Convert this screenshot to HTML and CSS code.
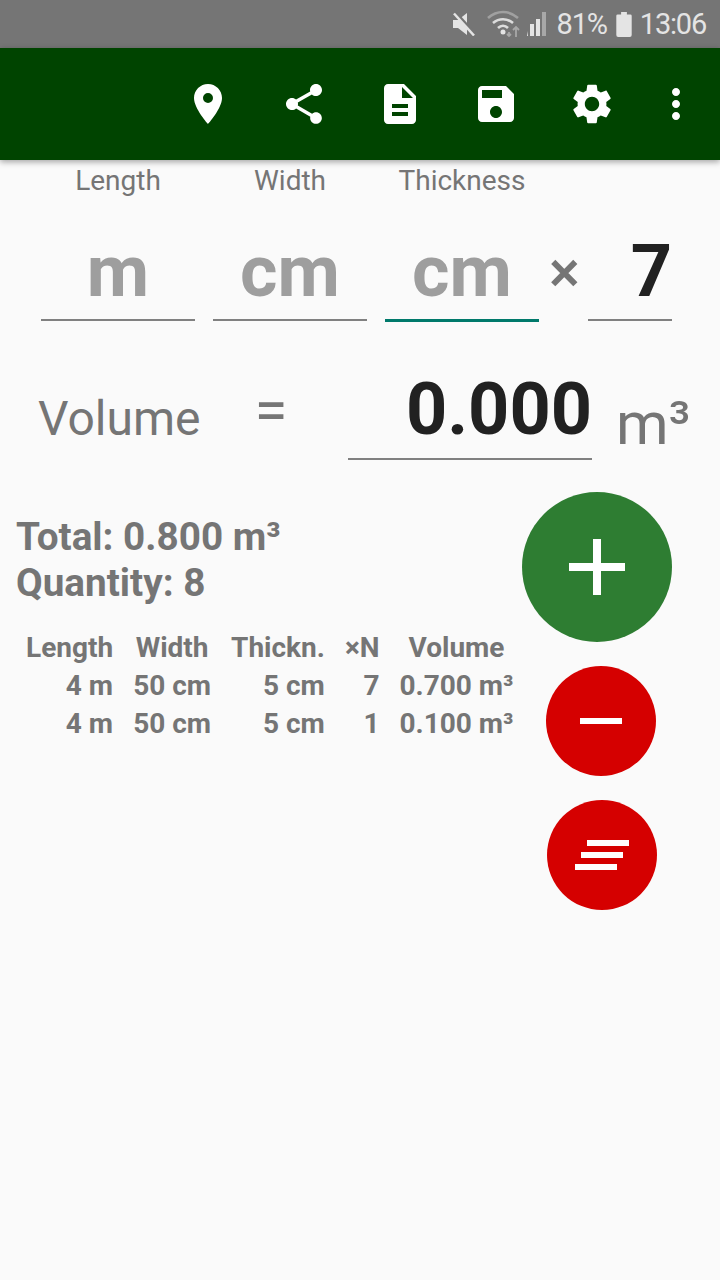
FILE: index.html
```html
<!DOCTYPE html>
<html lang="en">
<head>
<meta charset="utf-8">
<title>Volume</title>
<link rel="stylesheet" href="styles.css">
</head>
<body>
<div class="status">
  <svg class="st-mute" viewBox="0 0 24 24"><path d="M1 8h5l9-7v22l-9-7H1z"/><path class="st-gap" d="M4 1l19 21"/><path class="st-cut" d="M2 1.500l20 22"/></svg>
  <svg class="st-wifi" viewBox="0 0 37 28"><path class="arc-dim" d="M1 8C10 0 22 0 31 8"/><path class="arc" d="M6 13c6-5 14-5 20 0M11 18c3-3 7-3 10 0"/><circle class="dot" cx="16" cy="22" r="2.500"/><path class="arrows" d="M29 27v-10m-3 3l3-3 3 3M22 22v4m-2-2l2 2 2-2"/></svg>
  <svg class="st-signal" viewBox="0 0 26 26"><path d="M1 25h5l1-5v5zM9 25h4V13H9zM15 25h4V8h-4z"/><path class="dim" d="M21 25h4V1h-4z"/></svg>
  <span class="st-pct">81%</span>
  <svg class="st-batt" viewBox="0 0 16 26"><path d="M5 0h6v2.500h3.500q1.500 0 1.500 1.500v20q0 2-2 2H2q-2 0-2-2V4q0-1.500 1.500-1.500H5z"/></svg>
  <span class="st-time">13:06</span>
</div>

<header class="appbar">
  <svg class="ico" viewBox="0 0 24 24"><path d="M12 2C8.130 2 5 5.130 5 9c0 5.250 7 13 7 13s7-7.750 7-13c0-3.870-3.130-7-7-7zm0 9.500a2.500 2.500 0 0 1 0-5 2.500 2.500 0 0 1 0 5z"/></svg>
  <svg class="ico" viewBox="0 0 24 24"><path d="M18 16.080c-.760 0-1.440.300-1.960.770L8.910 12.700c.050-.230.090-.460.090-.700s-.040-.470-.090-.700l7.050-4.110c.540.500 1.250.810 2.040.810 1.660 0 3-1.340 3-3s-1.340-3-3-3-3 1.340-3 3c0 .240.040.470.090.700L8.040 9.810C7.500 9.310 6.790 9 6 9c-1.660 0-3 1.340-3 3s1.340 3 3 3c.790 0 1.500-.310 2.040-.810l7.120 4.160c-.050.210-.080.430-.080.650 0 1.610 1.310 2.920 2.920 2.920s2.920-1.310 2.920-2.920-1.310-2.920-2.920-2.920z"/></svg>
  <svg class="ico" viewBox="0 0 24 24"><path d="M14 2H6c-1.100 0-1.990.900-1.990 2L4 20c0 1.100.890 2 1.990 2H18c1.100 0 2-.900 2-2V8l-6-6zm2 16H8v-2h8v2zm0-4H8v-2h8v2zm-3-5V3.500L18.500 9H13z"/></svg>
  <svg class="ico" viewBox="0 0 24 24"><path d="M17 3H5c-1.110 0-2 .900-2 2v14c0 1.100.890 2 2 2h14c1.100 0 2-.900 2-2V7l-4-4zm-5 16c-1.660 0-3-1.340-3-3s1.340-3 3-3 3 1.340 3 3-1.340 3-3 3zm3-10H5V5h10v4z"/></svg>
  <svg class="ico" viewBox="0 0 24 24"><path d="M19.140 12.940c.040-.300.060-.610.060-.940 0-.320-.020-.640-.070-.940l2.030-1.580c.180-.140.230-.410.120-.610l-1.920-3.320c-.120-.220-.370-.290-.590-.220l-2.390.960c-.500-.380-1.030-.700-1.620-.940l-.360-2.540c-.040-.240-.240-.410-.480-.410h-3.840c-.240 0-.430.170-.470.410l-.360 2.540c-.590.240-1.130.570-1.620.940l-2.390-.960c-.220-.080-.470 0-.590.220L2.740 8.870c-.120.210-.080.470.120.610l2.030 1.580c-.050.300-.090.630-.090.940s.020.640.070.940l-2.030 1.580c-.180.140-.230.410-.120.610l1.920 3.320c.120.220.370.290.590.220l2.390-.960c.500.380 1.030.700 1.620.940l.360 2.540c.050.240.240.410.480.410h3.840c.240 0 .440-.170.470-.410l.360-2.540c.590-.240 1.130-.560 1.620-.940l2.390.960c.220.080.470 0 .590-.220l1.920-3.320c.120-.220.070-.470-.120-.610l-2.010-1.580zM12 15.600c-1.980 0-3.600-1.620-3.600-3.600s1.620-3.600 3.600-3.600 3.600 1.620 3.600 3.600-1.620 3.600-3.600 3.600z"/></svg>
  <svg class="ico ico-more" viewBox="0 0 24 24"><path d="M12 8c1.100 0 2-.900 2-2s-.900-2-2-2-2 .900-2 2 .900 2 2 2zm0 2c-1.100 0-2 .900-2 2s.900 2 2 2 2-.900 2-2-.900-2-2-2zm0 6c-1.100 0-2 .900-2 2s.900 2 2 2 2-.900 2-2-.900-2-2-2z"/></svg>
</header>

<main class="content">
  <div class="inputs">
    <div class="col"><div class="cap">Length</div><div class="field hint">m</div></div>
    <div class="col"><div class="cap">Width</div><div class="field hint">cm</div></div>
    <div class="col"><div class="cap">Thickness</div><div class="field hint focus">cm</div></div>
    <div class="times">×</div>
    <div class="col-n"><div class="field value">7</div></div>
  </div>

  <div class="volume">
    <div class="vol-label">Volume</div>
    <div class="vol-eq">=</div>
    <div class="vol-value">0.000</div>
    <div class="vol-unit">m³</div>
  </div>

  <div class="lower">
    <div class="results">
      <div class="summary">Total: 0.800 m³</div>
      <div class="summary">Quantity: 8</div>
      <table class="log">
        <tr><th>Length</th><th>Width</th><th>Thickn.</th><th>×N</th><th>Volume</th></tr>
        <tr><td>4 m</td><td>50 cm</td><td>5 cm</td><td>7</td><td>0.700 m³</td></tr>
        <tr><td>4 m</td><td>50 cm</td><td>5 cm</td><td>1</td><td>0.100 m³</td></tr>
      </table>
    </div>
    <div class="fabs">
      <div class="fab fab-add">
        <svg viewBox="0 0 56 56"><path d="M24 0h8v24h24v8H32v24h-8V32H0v-8h24z"/></svg>
      </div>
      <div class="fab fab-minus">
        <svg viewBox="0 0 42 6"><path d="M0 0h42v6H0z"/></svg>
      </div>
      <div class="fab fab-clear">
        <svg viewBox="0 0 54 30"><path d="M12 0h42v6H12zM6 12h42v6H6zM0 24h42v6H0z"/></svg>
      </div>
    </div>
  </div>
</main>
</body>
</html>
```

FILE: styles.css
```css
* { box-sizing: border-box; }
html, body { margin: 0; padding: 0; }
body {
  width: 720px;
  height: 1280px;
  overflow: hidden;
  background: #fafafa;
  font-family: Roboto, "Liberation Sans", sans-serif;
  color: #757575;
}

.status {
  height: 48px;
  background: #757575;
  color: #e4e4e4;
  display: flex;
  align-items: center;
  justify-content: flex-end;
  padding-right: 14px;
  font-size: 29px;
  letter-spacing: -1.200px;
  fill: #e4e4e4;
}
.status svg { display: block; }
.st-mute { width: 24px; height: 24px; margin-right: 11px; }
.st-gap { stroke: #757575; stroke-width: 3; fill: none; }
.st-cut { stroke: #e4e4e4; stroke-width: 2.500; fill: none; }
.st-wifi { width: 37px; height: 28px; margin-right: -3px; }
.st-wifi .arc-dim { fill: none; stroke: #a0a0a0; stroke-width: 2.600; }
.st-wifi .arc { fill: none; stroke: #dcdcdc; stroke-width: 2.600; }
.st-wifi .dot { fill: #e4e4e4; }
.st-wifi .arrows { fill: none; stroke: #a8a8a8; stroke-width: 1.800; }
.st-signal { width: 26px; height: 26px; margin-right: 10px; }
.st-signal .dim { fill: #a8a8a8; }
.st-pct { margin-right: 9px; }
.st-batt { width: 16px; height: 25px; margin-right: 8px; }

.appbar {
  height: 112px;
  background: #004400;
  box-shadow: 0 2px 6px rgba(0, 0, 0, .35);
  display: flex;
  align-items: flex-start;
  justify-content: flex-end;
  gap: 48px;
  padding: 32px 20px 0 0;
  fill: #fff;
  position: relative;
}
.ico { width: 48px; height: 48px; display: block; flex: none; }
.ico-more { margin-left: -12px; }

.inputs {
  display: flex;
  align-items: flex-end;
  padding-left: 41px;
  height: 161px;
}
.col { width: 154px; margin-right: 18px; text-align: center; }
.cap { font-size: 28px; line-height: 40px; height: 40px; margin-bottom: 16px; color: #757575; }
.field {
  height: 104px;
  line-height: 110px;
  font-size: 72px;
  font-weight: 700;
  text-align: center;
  border-bottom: 2px solid #808080;
}
.hint { color: #9e9e9e; }
.focus { border-bottom: 3px solid #00796b; height: 105px; margin-bottom: -1px; }
.value { color: #212121; text-align: right; }
.times {
  width: 47px;
  margin-left: -16px;
  font-size: 58px;
  font-weight: 500;
  text-align: center;
  line-height: 110px;
  height: 104px;
  color: #757575;
}
.col-n { width: 84px; }

.volume {
  display: flex;
  align-items: flex-start;
  height: 138px;
}
.vol-label { width: 162px; margin: 70px 0 0 38px; font-size: 48px; line-height: 56px; }
.vol-eq { width: 64px; margin: 62px 0 0 39px; text-align: center; font-size: 60px; line-height: 56px; }
.vol-value {
  width: 244px;
  margin: 45px 0 0 45px;
  height: 94px;
  border-bottom: 2px solid #808080;
  font-size: 72px;
  font-weight: 700;
  line-height: 88px;
  text-align: right;
  color: #212121;
}
.vol-unit { margin: 70px 0 0 24px; font-size: 60px; line-height: 66px; }

.lower { display: flex; align-items: flex-start; }
.results { width: 522px; padding: 55px 0 0 16px; }
.summary { font-size: 38.700px; font-weight: 700; line-height: 46px; }
.log { border-collapse: collapse; margin: 23px 0 0 10px; font-size: 28px; font-weight: 700; }
.log th, .log td { padding: 0 0 0 20px; height: 38px; line-height: 38px; white-space: nowrap; }
.log th { font-weight: 700; text-align: center; }
.log td { text-align: right; }
.log th:first-child, .log td:first-child { padding-left: 0; }

.fabs { display: flex; flex-direction: column; align-items: flex-start; padding-top: 33px; }
.fab { border-radius: 50%; display: flex; align-items: center; justify-content: center; fill: #fff; }
.fab-add { width: 150px; height: 150px; background: #2e7d32; }
.fab-add svg { width: 56px; height: 56px; }
.fab-minus, .fab-clear { width: 110px; height: 110px; background: #d50000; }
.fab-minus { margin: 24px 0 0 24px; }
.fab-minus svg { width: 42px; height: 6px; }
.fab-clear { margin: 24px 0 0 25px; }
.fab-clear svg { width: 54px; height: 30px; }
```
